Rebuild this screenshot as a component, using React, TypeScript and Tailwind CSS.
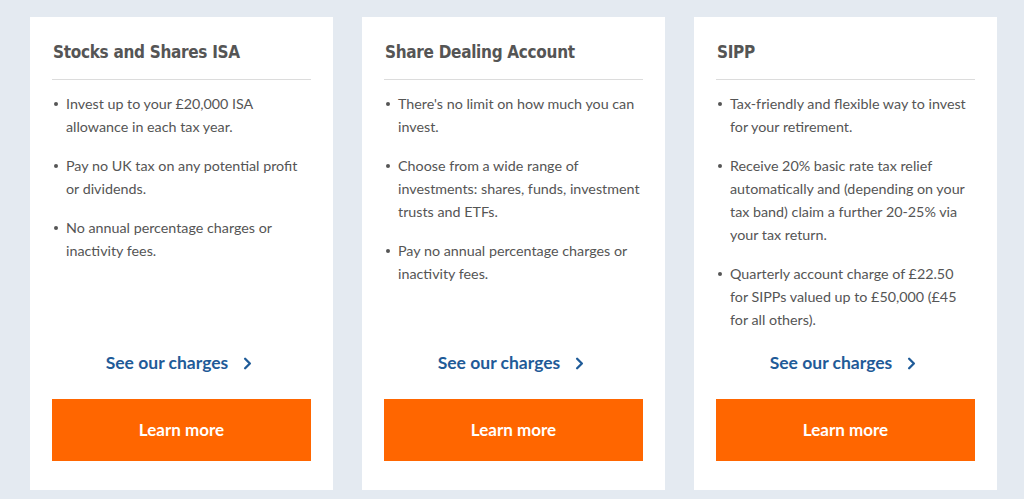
import { ChevronRight } from 'lucide-react';

const products = [
  {
    title: 'Stocks and Shares ISA',
    points: [
      'Invest up to your £20,000 ISA allowance in each tax year.',
      'Pay no UK tax on any potential profit or dividends.',
      'No annual percentage charges or inactivity fees.',
    ],
  },
  {
    title: 'Share Dealing Account',
    points: [
      "There's no limit on how much you can invest.",
      'Choose from a wide range of investments: shares, funds, investment trusts and ETFs.',
      'Pay no annual percentage charges or inactivity fees.',
    ],
  },
  {
    title: 'SIPP',
    points: [
      'Tax-friendly and flexible way to invest for your retirement.',
      'Receive 20% basic rate tax relief automatically and (depending on your tax band) claim a further 20-25% via your tax return.',
      'Quarterly account charge of £22.50 for SIPPs valued up to £50,000 (£45 for all others).',
    ],
  },
];

function ProductCard({ title, points }: { title: string; points: string[] }) {
  return (
    <div className="bg-white flex flex-col px-[22px] pt-[21px] pb-[29px]">
      <h2 className="text-[17px] leading-[28px] font-bold tracking-[-0.3px] text-[#555555] pl-px [font-family:'DejaVu_Sans_Condensed','Roboto_Condensed','Liberation_Sans',sans-serif]">
        {title}
      </h2>
      <div className="h-px bg-[#dcdcdc] mt-[13px] mb-[12px]" />
      <ul className="flex flex-col gap-[16px] pr-[1px]">
        {points.map((p) => (
          <li key={p} className="flex text-[14.3px] leading-[23px] text-[#555555] [font-family:Lato,'Open_Sans',sans-serif]">
            <span className="w-[14px] flex-shrink-0 pl-[2px] pt-[10px]">
              <span className="block w-[4px] h-[4px] rounded-full bg-[#555555]" />
            </span>
            <span>{p}</span>
          </li>
        ))}
      </ul>
      <a className="mt-auto flex items-center justify-center gap-[10px] text-[17.5px] leading-[24px] font-bold text-[#1f5b98] [font-family:Lato,'Open_Sans',sans-serif]">
        See our charges <ChevronRight size={19} strokeWidth={3} />
      </a>
      <button className="mt-[24px] h-[62px] w-full bg-[#ff6600] text-white text-[17px] font-bold [font-family:Lato,'Open_Sans',sans-serif]">
        Learn more
      </button>
    </div>
  );
}

export default function App() {
  return (
    <div className="h-[499px] bg-[#e4eaf1] pt-[17px] pb-[9px] pl-[30px] pr-[27px] grid grid-cols-3 gap-[29px]">
      {products.map((p) => (
        <ProductCard key={p.title} {...p} />
      ))}
    </div>
  );
}
